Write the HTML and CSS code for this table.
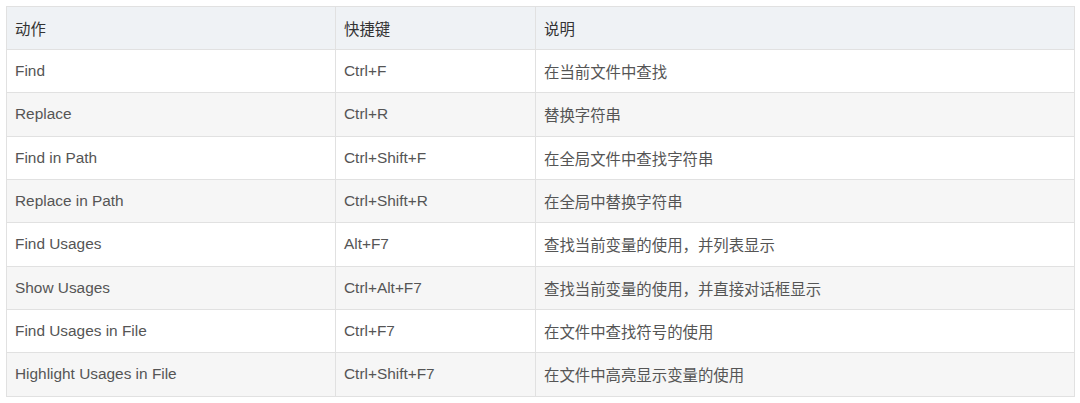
FILE: index.html
```html
<!DOCTYPE html>
<html lang="zh-CN">
<head>
<meta charset="utf-8">
<link rel="stylesheet" href="styles.css">
</head>
<body>
<div class="wrap">
<table class="keys">
  <colgroup>
    <col class="c1"><col class="c2"><col class="c3">
  </colgroup>
  <thead>
    <tr><th>动作</th><th>快捷键</th><th>说明</th></tr>
  </thead>
  <tbody>
    <tr><td>Find</td><td>Ctrl+F</td><td>在当前文件中查找</td></tr>
    <tr><td>Replace</td><td>Ctrl+R</td><td>替换字符串</td></tr>
    <tr><td>Find in Path</td><td>Ctrl+Shift+F</td><td>在全局文件中查找字符串</td></tr>
    <tr><td>Replace in Path</td><td>Ctrl+Shift+R</td><td>在全局中替换字符串</td></tr>
    <tr><td>Find Usages</td><td>Alt+F7</td><td>查找当前变量的使用，并列表显示</td></tr>
    <tr><td>Show Usages</td><td>Ctrl+Alt+F7</td><td>查找当前变量的使用，并直接对话框显示</td></tr>
    <tr><td>Find Usages in File</td><td>Ctrl+F7</td><td>在文件中查找符号的使用</td></tr>
    <tr><td>Highlight Usages in File</td><td>Ctrl+Shift+F7</td><td>在文件中高亮显示变量的使用</td></tr>
  </tbody>
</table>
</div>
</body>
</html>
```
FILE: styles.css
```css
html, body {
  margin: 0;
  padding: 0;
  background: #ffffff;
}
.wrap {
  padding: 6px 6px 0 6px;
}
.keys {
  width: 1068px;
  border-collapse: collapse;
  table-layout: fixed;
  font-family: "Liberation Sans", Arial, "Noto Sans CJK SC", sans-serif;
  font-size: 15.4px;
  color: #555555;
}
.c1 { width: 329px; }
.c2 { width: 200px; }
.c3 { width: 539px; }
.keys th, .keys td {
  border: 1px solid #e1e1e1;
  padding: 0 8px;
  text-align: left;
  white-space: nowrap;
}
.keys th {
  height: 42px;
  background: #eff2f5;
  color: #333333;
  font-weight: normal;
}
.keys td {
  height: 42.33px;
}
.keys tbody tr:nth-child(even) td {
  background: #f6f6f6;
}
```
